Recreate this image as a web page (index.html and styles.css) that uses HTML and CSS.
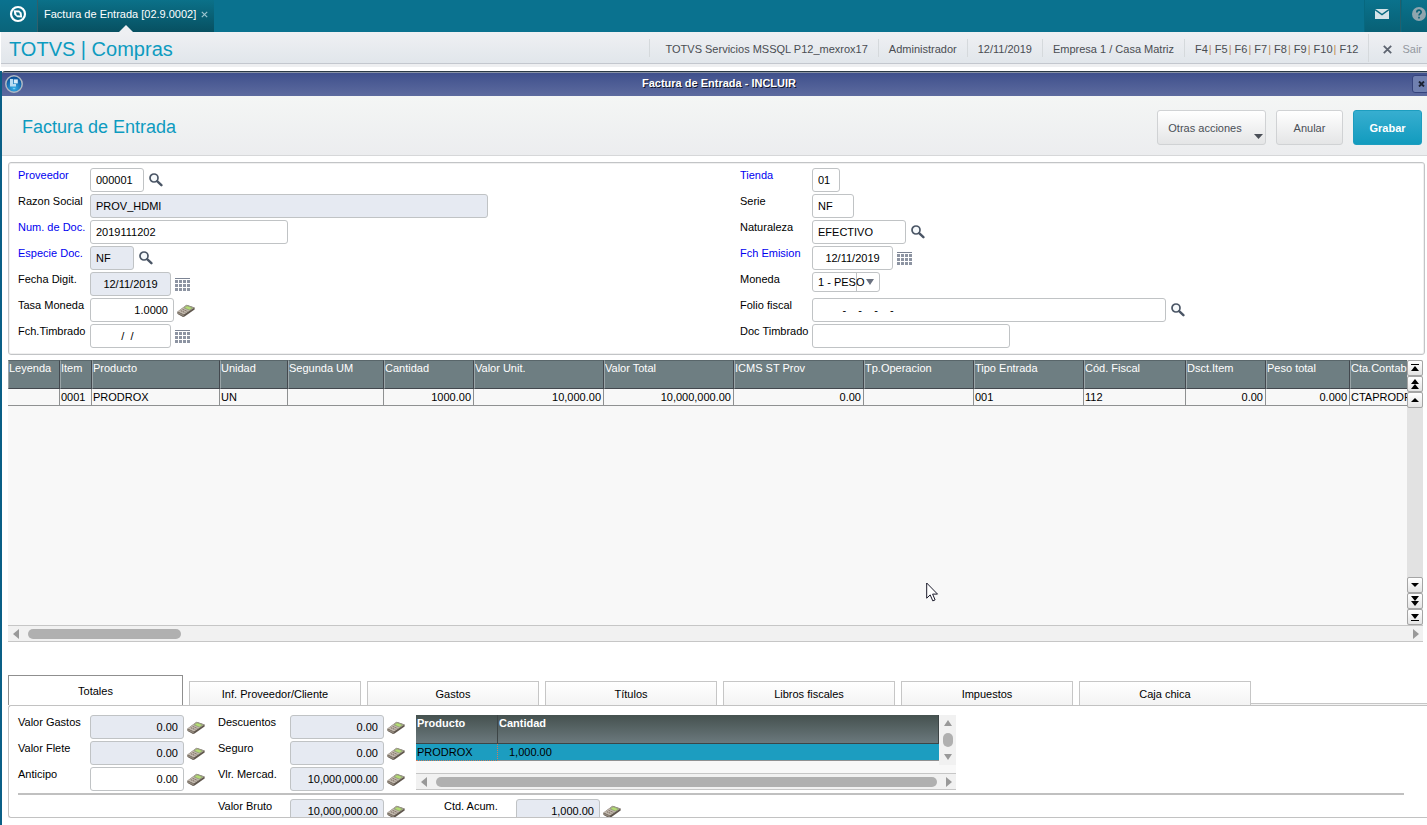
FILE: index.html
```html
<!DOCTYPE html>
<html lang="es">
<head>
<meta charset="utf-8">
<title>Factura de Entrada</title>
<link rel="stylesheet" href="styles.css">
</head>
<body>
<svg class="defs" aria-hidden="true">
  <symbol id="i-search" viewBox="0 0 14 14"><circle cx="5" cy="5" r="4" fill="#f6f9fb" stroke="#4a5565" stroke-width="1.7"/><path d="M8.400 8.400l4 3.800" stroke="#4a5565" stroke-width="2.4" stroke-linecap="round"/></symbol>
  <symbol id="i-cal" viewBox="0 0 15 14"><path d="M0 .5h15" stroke="#7c8494"/><path d="M0 3.5h15M0 7.5h15M0 11.5h15" stroke="#8d94a2" stroke-width="3" stroke-dasharray="3 1"/></symbol>
  <symbol id="i-calc" viewBox="0 0 18 14"><path d="M.3 7.800L9.600.8l8 2.800v2L7.600 12.600 6 13 .6 10z" fill="#5f564d"/><path d="M.6 7.600L9.600 1l7.600 2.800L7 10.600z" fill="#c2b9ae"/><path d="M.6 8l6.200 2.800v1.600L.6 9.600z" fill="#93897d"/><path d="M10 1.700l5.800 2.200-3.400 2.200-5.200-2.200z" fill="#b5dc74" stroke="#7d8a6c" stroke-width=".6"/><path d="M5.600 5.300l4.800 2.100M3.800 6.700l4.600 2" stroke="#7a6a5f" stroke-width="1" stroke-dasharray="1.400 .7"/></symbol>
  <symbol id="i-left" viewBox="0 0 6 10"><path d="M6 0v10L0 5z" fill="#999"/></symbol>
  <symbol id="i-right" viewBox="0 0 6 10"><path d="M0 0v10l6-5z" fill="#999"/></symbol>
  <symbol id="i-up" viewBox="0 0 8 6"><path d="M0 6h8L4 0z" fill="#999"/></symbol>
  <symbol id="i-down" viewBox="0 0 8 6"><path d="M0 0h8L4 6z" fill="#999"/></symbol>
</svg>
<div class="app">
  <header class="topbar">
    <button class="home" aria-label="Inicio"><svg width="18" height="18" viewBox="0 0 18 18"><circle cx="9" cy="9" r="7" fill="none" stroke="#fff" stroke-width="2.2"/><path d="M4.600 5.200l5.600.4 2.400 2.200.6 4.800-5-.4-2.800-2.400z" fill="#fff"/><path d="M7 7.200l3.200.4 1 3-3.400-.4z" fill="#0b6d85"/></svg></button>
    <div class="apptab"><span>Factura de Entrada [02.9.0002]</span><button class="tabclose" aria-label="Cerrar pestaña"><svg width="7" height="7" viewBox="0 0 7 7"><path d="M.8.8l5.400 5.400M6.200.8L.8 6.200" stroke="#9cc4cf" stroke-width="1.2"/></svg></button></div>
    <div class="toptools">
      <button class="tool" aria-label="Mensajes"><svg width="14" height="10" viewBox="0 0 14 10"><path d="M0 0h14v10H0z" fill="#d5e3e8"/><path d="M0 .6l7 5 7-5" fill="none" stroke="#0a6a80" stroke-width="1.3"/></svg></button>
      <button class="tool" aria-label="Ayuda"><svg width="14" height="14" viewBox="0 0 14 14"><circle cx="7" cy="7" r="7" fill="#8fa5ae"/><path d="M4.800 5.400c0-3 4.400-3 4.400-.3 0 1.700-2.200 1.600-2.200 3.400M7 9.800v1.600" fill="none" stroke="#0a6277" stroke-width="1.6"/></svg></button>
    </div>
  </header>
  <div class="modbar">
    <h1>TOTVS | Compras</h1>
    <ul class="info">
      <li>TOTVS Servicios MSSQL P12_mexrox17</li><li>Administrador</li><li>12/11/2019</li><li>Empresa 1 / Casa Matriz</li><li>F4<i>|</i> F5<i>|</i> F6<i>|</i> F7<i>|</i> F8<i>|</i> F9<i>|</i> F10<i>|</i> F12</li>
    </ul>
    <button class="exit"><svg width="9" height="9" viewBox="0 0 9 9"><path d="M.8.8l7.400 7.400M8.200.8L.8 8.200" stroke="#5d6470" stroke-width="1.8"/></svg>Sair</button>
  </div>
  <section class="window">
    <div class="titlebar">
      <svg width="18" height="18" viewBox="0 0 18 18"><defs><radialGradient id="orb" cx=".5" cy=".75" r=".7"><stop offset="0" stop-color="#35b0ea"/><stop offset="1" stop-color="#0a4a92"/></radialGradient></defs><circle cx="9" cy="9" r="8.2" fill="url(#orb)" stroke="#aeb8c4" stroke-width="1.5"/><path d="M5 4h3v5h3v2.400H5z" fill="#b9dcf2"/><path d="M8.800 4.400h4v4h-4z" fill="#d9edf9"/><path d="M7.600 13h3L9 14.400z" fill="#7fd0f5"/></svg>
      <h2>Factura de Entrada - INCLUIR</h2>
      <button class="winclose" aria-label="Cerrar"><svg width="7" height="6" viewBox="0 0 7 6"><path d="M1 .5l5 5M6 .5l-5 5" stroke="#1c2233" stroke-width="1.9"/></svg></button>
    </div>
    <div class="actions">
      <h3>Factura de Entrada</h3>
      <button class="btn more">Otras acciones<svg width="9" height="5" viewBox="0 0 9 5"><path d="M0 0h9L4.500 5z" fill="#4a4f57"/></svg></button>
      <button class="btn cancel">Anular</button>
      <button class="btn primary">Grabar</button>
    </div>
    <main class="content">
      <form class="form">
        <div class="col">
          <div class="field"><label class="req" for="prov">Proveedor</label><input id="prov" class="w54" value="000001"><svg class="ic s"><use href="#i-search"/></svg></div>
          <div class="field"><label for="razon">Razon Social</label><input id="razon" class="w398" value="PROV_HDMI" readonly></div>
          <div class="field"><label class="req" for="num">Num. de Doc.</label><input id="num" class="w198" value="2019111202"></div>
          <div class="field"><label class="req" for="esp">Especie Doc.</label><input id="esp" class="w44" value="NF" readonly><svg class="ic s"><use href="#i-search"/></svg></div>
          <div class="field"><label for="fdig">Fecha Digit.</label><input id="fdig" class="w81 date" value="12/11/2019" readonly><svg class="ic c"><use href="#i-cal"/></svg></div>
          <div class="field"><label for="tasa">Tasa Moneda</label><input id="tasa" class="w84 num" value="1.0000"><svg class="ic k"><use href="#i-calc"/></svg></div>
          <div class="field"><label for="ftim">Fch.Timbrado</label><input id="ftim" class="w81 date" value="/  /  "><svg class="ic c"><use href="#i-cal"/></svg></div>
        </div>
        <div class="col">
          <div class="field"><label class="req" for="tienda">Tienda</label><input id="tienda" class="w28" value="01"></div>
          <div class="field"><label for="serie">Serie</label><input id="serie" class="w42" value="NF"></div>
          <div class="field"><label for="nat">Naturaleza</label><input id="nat" class="w94" value="EFECTIVO"><svg class="ic s"><use href="#i-search"/></svg></div>
          <div class="field"><label class="req" for="femi">Fch Emision</label><input id="femi" class="w81 date" value="12/11/2019"><svg class="ic c"><use href="#i-cal"/></svg></div>
          <div class="field"><label for="mon">Moneda</label><span class="combo"><select id="mon"><option>1 - PESO</option></select><svg width="8" height="6"><path d="M0 0h8L4 6z" fill="#6b7280"/></svg></span></div>
          <div class="field"><label for="folio">Folio fiscal</label><input id="folio" class="w354" value="        -    -    -    -"><svg class="ic s"><use href="#i-search"/></svg></div>
          <div class="field"><label for="dtim">Doc Timbrado</label><input id="dtim" class="w198"></div>
        </div>
      </form>

      <section class="grid">
        <div class="gridview">
          <table class="items">
            <colgroup><col class="c52"><col class="c32"><col class="c128"><col class="c68"><col class="c96"><col class="c90"><col class="c130"><col class="c130"><col class="c130"><col class="c110"><col class="c110"><col class="c102"><col class="c80"><col class="c84"><col></colgroup>
            <thead><tr><th>Leyenda</th><th>Item</th><th>Producto</th><th>Unidad</th><th>Segunda UM</th><th>Cantidad</th><th>Valor Unit.</th><th>Valor Total</th><th>ICMS ST Prov</th><th>Tp.Operacion</th><th>Tipo Entrada</th><th>Cód. Fiscal</th><th>Dsct.Item</th><th>Peso total</th><th>Cta.Contabl</th></tr></thead>
            <tbody><tr><td></td><td>0001</td><td>PRODROX</td><td>UN</td><td></td><td class="r">1000.00</td><td class="r">10,000.00</td><td class="r">10,000,000.00</td><td class="r">0.00</td><td></td><td>001</td><td>112</td><td class="r">0.00</td><td class="r">0.000</td><td>CTAPRODR</td></tr></tbody>
          </table>
        </div>
        <div class="vnav">
          <button aria-label="Primero"><svg width="8" height="8"><path d="M0 .5h8" stroke="#000"/><path d="M0 7h8L4 2z"/></svg></button>
          <button aria-label="Página anterior"><svg width="8" height="10"><path d="M0 5h8L4 0zM0 10h8L4 5z"/></svg></button>
          <button aria-label="Anterior"><svg width="8" height="4"><path d="M0 4h8L4 0z"/></svg></button>
          <span class="track"></span>
          <button aria-label="Siguiente"><svg width="8" height="4"><path d="M0 0h8L4 4z"/></svg></button>
          <button aria-label="Página siguiente"><svg width="8" height="10"><path d="M0 0h8L4 5zM0 5h8l-4 5z"/></svg></button>
          <button aria-label="Último"><svg width="8" height="8"><path d="M0 7.500h8" stroke="#000"/><path d="M0 1h8L4 6z"/></svg></button>
        </div>
        <div class="hscroll"><svg width="6" height="10"><use href="#i-left"/></svg><span class="thumb short"></span><svg class="end" width="6" height="10"><use href="#i-right"/></svg></div>
      </section>

      <div class="tabs" role="tablist">
        <button class="tab on" role="tab" aria-selected="true">Totales</button><button class="tab" role="tab">Inf. Proveedor/Cliente</button><button class="tab" role="tab">Gastos</button><button class="tab" role="tab">Títulos</button><button class="tab" role="tab">Libros fiscales</button><button class="tab" role="tab">Impuestos</button><button class="tab" role="tab">Caja chica</button><span class="rail"></span>
      </div>
      <section class="totals">
        <div class="upper">
          <div class="tcol first">
            <div class="field"><label for="vg">Valor Gastos</label><input id="vg" class="w94 num" value="0.00" readonly><svg class="ic k"><use href="#i-calc"/></svg></div>
            <div class="field"><label for="vf">Valor Flete</label><input id="vf" class="w94 num" value="0.00" readonly><svg class="ic k"><use href="#i-calc"/></svg></div>
            <div class="field"><label for="an">Anticipo</label><input id="an" class="w94 num" value="0.00"><svg class="ic k"><use href="#i-calc"/></svg></div>
          </div>
          <div class="tcol">
            <div class="field"><label for="de">Descuentos</label><input id="de" class="w94 num" value="0.00" readonly><svg class="ic k"><use href="#i-calc"/></svg></div>
            <div class="field"><label for="se">Seguro</label><input id="se" class="w94 num" value="0.00" readonly><svg class="ic k"><use href="#i-calc"/></svg></div>
            <div class="field"><label for="vm">Vlr. Mercad.</label><input id="vm" class="w94 num" value="10,000,000.00" readonly><svg class="ic k"><use href="#i-calc"/></svg></div>
          </div>
          <div class="mini">
            <div class="miniview">
              <table class="prod"><colgroup><col class="c82"><col></colgroup>
                <thead><tr><th>Producto</th><th>Cantidad</th></tr></thead>
                <tbody><tr><td class="focus">PRODROX</td><td class="qty">1,000.00</td></tr></tbody></table>
              <div class="vscroll"><svg width="8" height="6"><use href="#i-up"/></svg><span></span><svg width="8" height="6"><use href="#i-down"/></svg></div>
            </div>
            <div class="hscroll"><svg width="6" height="10"><use href="#i-left"/></svg><span class="thumb full"></span><svg width="6" height="10"><use href="#i-right"/></svg></div>
          </div>
        </div>
        <hr>
        <div class="lower">
          <div class="field"><label for="vb">Valor Bruto</label><input id="vb" class="w94 num" value="10,000,000.00" readonly><svg class="ic k"><use href="#i-calc"/></svg></div>
          <div class="field"><label for="ca">Ctd. Acum.</label><input id="ca" class="w84 num" value="1,000.00" readonly><svg class="ic k"><use href="#i-calc"/></svg></div>
        </div>
      </section>
    </main>
  </section>
  <svg class="cursor" width="13" height="20" viewBox="0 0 13 20"><path d="M.7 1v15.200l3.500-3.300 2.600 6 2.300-1-2.500-5.800h4.900z" fill="#fff" stroke="#1b1b2b"/></svg>
</div>
</body>
</html>
```
FILE: styles.css
```css
* { box-sizing: border-box; }
body { margin: 0; background: #fff; color: #000; font: 11px/16px "Liberation Sans", Arial, sans-serif; }
button, input, select { font: inherit; color: inherit; margin: 0; padding: 0; }
button { background: none; border: 0; }
h1, h2, h3, ul { margin: 0; padding: 0; font-weight: normal; list-style: none; }
svg { display: block; flex: none; }
.defs { position: absolute; width: 0; height: 0; }
.app { position: relative; height: 100vh; min-height: 700px; display: flex; flex-direction: column; overflow: hidden; }

.topbar { flex: none; height: 32px; display: flex; background: #0a728f; color: #fff; }
.home { width: 38px; padding: 0 0 4px 9px; background: linear-gradient(#0a728f, #0a647a); border-right: 1px solid #30606c; }
.apptab { position: relative; display: flex; align-items: center; gap: 5px; padding: 0 6px 4px; background: linear-gradient(#0b7189, #075061); }
.apptab::after { content: ""; position: absolute; left: 50%; bottom: 0; margin-left: -7px; border: 7px solid transparent; border-top: 0; border-bottom-color: #eef0f3; }
.toptools { margin-left: auto; display: flex; margin-right: -11px; }
.tool { width: 37px; padding: 0 1px 4px 10px; background: linear-gradient(#0a728c, #086075); border-left: 1px solid #07687f; border-right: 1px solid #245f6c; }

.modbar { flex: none; height: 35px; margin: 0 0 4px 1px; padding-left: 8px; display: flex; align-items: center; padding-bottom: 3px; background: linear-gradient(#eff0f3, #e1e6eb 31px, #c3c7ce 31px, #c3c7ce 32px, #eeeff1 32px); color: #4a4d52; }
.modbar h1 { font-size: 20px; line-height: 24px; color: #0d9bc0; margin-right: auto; padding-top: 2px; white-space: nowrap; }
.info { display: flex; white-space: nowrap; }
.info li { padding: 2px 10px 0; border-left: 1px solid #d5d9dc; }
.info li:first-child { padding-left: 16px; }
.info i { color: #c08a50; font-style: normal; margin-left: 1px; }
.exit { display: flex; align-items: center; gap: 10px; height: 28px; padding: 2px 5px 0 14px; border-left: 1px solid #d5d9dc; color: #9398a0; }

.window { flex: 1; min-height: 0; display: flex; flex-direction: column; border-left: 2px solid #0a5f86; }
.titlebar { flex: none; height: 25px; display: flex; align-items: center; padding: 0 0 0 3px; border-top: 1px solid #2b3a45; border-radius: 3px 0 0 0; background: linear-gradient(#8a93a5 1px, #3f508c 1px, #5d6b9f); }
.titlebar h2 { flex: 1; text-align: center; font-size: 11px; line-height: 16px; font-weight: bold; color: #fff; text-shadow: 1px 1px 0 #10152a; padding: 0 0 2px 3px; }
.winclose { width: 17px; height: 18px; margin-right: -2px; padding: 0 0 0 5px; border: 1px solid #35437c; border-radius: 3px; background: #7080b0; }
.actions { flex: none; height: 60px; display: flex; align-items: center; gap: 10px; padding: 4px 5px 0 20px; border-bottom: 1px solid #d6d7d9; background: linear-gradient(#f4f6f5, #ecedef); }
.actions h3 { font-size: 18px; line-height: 24px; color: #0d9bc0; margin-right: auto; padding-bottom: 2px; }
.btn { height: 35px; border: 1px solid #d0d2d4; border-radius: 3px; background: linear-gradient(#fff, #e4e5e6); color: #4a4f57; }
.more { position: relative; width: 109px; padding-right: 13px; }
.more svg { position: absolute; right: 2px; bottom: 5px; }
.cancel { width: 67px; }
.primary { width: 69px; border-color: #1d9dbf; background: linear-gradient(#37aed0, #129bbe); color: #fff; font-weight: bold; }

.content { flex: 1; min-height: 0; display: flex; flex-direction: column; padding: 6px 0 7px 6px; }
.form { flex: none; display: grid; grid-template-columns: 722px 1fr; margin-right: 2px; padding: 5px 0 4px 9px; border: 1px solid #c2c4c6; border-radius: 3px; box-shadow: inset 0 0 0 1px #f0f0f0; }
.field { display: flex; height: 26px; align-items: flex-start; }
.field label { width: 72px; flex: none; white-space: nowrap; line-height: 15px; }
.field .req { color: #0000f0; }
.field input { height: 24px; border: 1px solid #c0c3c5; border-radius: 3px; padding: 0 5px 1px; background: #fff; outline: 0; }
.field input[readonly] { background: #e6eaf2; }
.field .num { text-align: right; }
.field .date { text-align: center; }
.ic.s { width: 14px; height: 14px; margin: 5px 0 0 5px; }
.ic.c { width: 15px; height: 14px; margin: 6px 0 0 4px; }
.ic.k { width: 18px; height: 14px; margin: 6px 0 0 3px; }
.w28 { width: 28px; } .w42 { width: 42px; } .w44 { width: 44px; } .w54 { width: 54px; }
.w81 { width: 81px; } .w84 { width: 84px; } .w94 { width: 94px; } .w198 { width: 198px; }
.w354 { width: 354px; } .w398 { width: 398px; }
.combo { position: relative; width: 68px; height: 20px; }
.combo select { appearance: none; width: 68px; height: 20px; padding-left: 5px; border: 1px solid #c0c3c5; border-radius: 3px; background: linear-gradient(#c0c3c5, #c0c3c5) 43px 0 / 1px 100% no-repeat #fff; }
.combo svg { position: absolute; right: 6px; top: 7px; }

.grid { flex: 1; min-height: 0; margin: 5px 4px 0 0; display: grid; grid-template: 1fr 17px / 1fr 16px; }
.gridview { overflow: hidden; background: #f8f8f8; min-width: 0; }
table { border-collapse: separate; border-spacing: 0; table-layout: fixed; }
.items { width: 1450px; }
.c32 { width: 32px; } .c52 { width: 52px; } .c68 { width: 68px; } .c80 { width: 80px; } .c82 { width: 82px; } .c84 { width: 84px; }
.c90 { width: 90px; } .c96 { width: 96px; } .c102 { width: 102px; } .c110 { width: 110px; } .c128 { width: 128px; } .c130 { width: 130px; }
th, td { padding: 0 1px; text-align: left; vertical-align: top; font-weight: normal; white-space: nowrap; overflow: hidden; }
.items th { height: 29px; padding: 0; line-height: 14px; background: #6e7e82; color: #fff; border-top: 1px solid #59666a; border-bottom: 1px solid #43484e; border-right: 1px solid #43484e; border-left: 1px solid #9aa5a8; }
.items td { height: 17px; border-right: 1px solid #8f9192; border-bottom: 1px solid #8f9192; }
.items .r { text-align: right; padding-right: 2px; }
.vnav { display: flex; flex-direction: column; background: #e2e2e2; }
.vnav button { height: 16px; display: flex; align-items: center; justify-content: center; border: 1px solid #a5a5a5; border-radius: 2px; background: linear-gradient(#fff, #e4e4e4); }
.track { flex: 1; }
.hscroll { grid-column: 1 / -1; height: 17px; display: flex; align-items: center; gap: 9px; padding: 0 4px 0 5px; background: #f1f1f1; border-top: 1px solid #c6c6c6; border-bottom: 1px solid #c6c6c6; }
.thumb { height: 10px; border-radius: 5px; background: #b0b0b0; }
.short { width: 153px; }
.full { flex: 1; }
.end { margin-left: auto; }

.tabs { flex: none; margin-top: 33px; height: 30px; display: flex; align-items: flex-end; gap: 6px; }
.tab { width: 172px; height: 24px; border: 1px solid #c6c6c6; border-bottom: 0; background: linear-gradient(#fff, #f3f3f3); }
.tab.on { width: 175px; height: 30px; border-color: #8f8f8f; background: #fff; }
.rail { flex: 1; height: 2px; margin-left: -6px; border-top: 1px solid #c6c6c6; background: #f3f3f3; }
.totals { flex: none; height: 113px; overflow: hidden; border: 1px solid #c2c2c2; border-right: 0; border-radius: 3px 0 0 3px; padding: 9px 0 0 9px; }
.upper { display: flex; }
.tcol { flex: none; width: 198px; }
.tcol.first { width: 200px; }
.mini { width: 540px; height: 75px; display: flex; flex-direction: column; background: #f8f8f8; }
.miniview { flex: 1; display: flex; align-items: flex-start; }
.prod { flex: 1; }
.prod th { height: 29px; background: linear-gradient(#45514f, #6b797d); color: #fff; font-weight: bold; border-right: 1px solid #3d4546; border-bottom: 1px solid #3d4546; }
.prod td { height: 17px; background: #1c9dc0; border-bottom: 1px solid #8f9192; }
.prod .focus { border-right: 1px dotted #d27a5c; border-bottom: 1px dotted #d27a5c; }
.prod .qty { padding-left: 11px; }
.vscroll { width: 17px; height: 50px; display: flex; flex-direction: column; align-items: center; gap: 7px; padding-top: 5px; background: #f1f1f1; }
.vscroll span { width: 10px; height: 14px; border-radius: 5px; background: #b0b0b0; }
.totals hr { height: 2px; border: 0; margin: 0 23px 4px 0; background: #c0c0c0; }
.lower { display: flex; padding-left: 200px; }
.lower .field { width: 226px; }
.cursor { position: absolute; left: 926px; top: 582px; }
```
